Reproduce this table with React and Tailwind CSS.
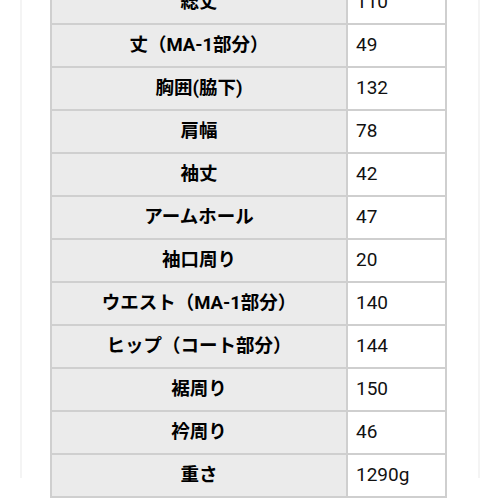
import React from 'react';

const rows = [
  ['総丈', '110'],
  ['丈（MA-1部分）', '49'],
  ['胸囲(脇下)', '132'],
  ['肩幅', '78'],
  ['袖丈', '42'],
  ['アームホール', '47'],
  ['袖口周り', '20'],
  ['ウエスト（MA-1部分）', '140'],
  ['ヒップ（コート部分）', '144'],
  ['裾周り', '150'],
  ['衿周り', '46'],
  ['重さ', '1290g'],
];

export default function App() {
  return (
    <div
      className="w-[498px] h-[498px] overflow-hidden bg-white"
      style={{ fontFamily: 'Roboto, "Noto Sans CJK JP", sans-serif' }}
    >
      <div className="ml-[20px] w-[460px] h-full border-x-2 border-[#f4f4f4]">
        <div className="ml-[28px] w-[397px] mt-[-20px] border-x-2 border-t-2 border-[#cfcfcf]">
          {rows.map(([label, value]) => (
            <div key={label} className="flex h-[43px] border-b-2 border-[#cfcfcf]">
              <div className="w-[296px] shrink-0 border-r-2 border-[#cfcfcf] bg-[#ebebeb] flex items-center justify-center text-[18.5px] font-bold text-black">
                {label}
              </div>
              <div className="flex-1 flex items-center pl-[8px] text-[19px] text-[#111]">
                {value}
              </div>
            </div>
          ))}
        </div>
      </div>
    </div>
  );
}
